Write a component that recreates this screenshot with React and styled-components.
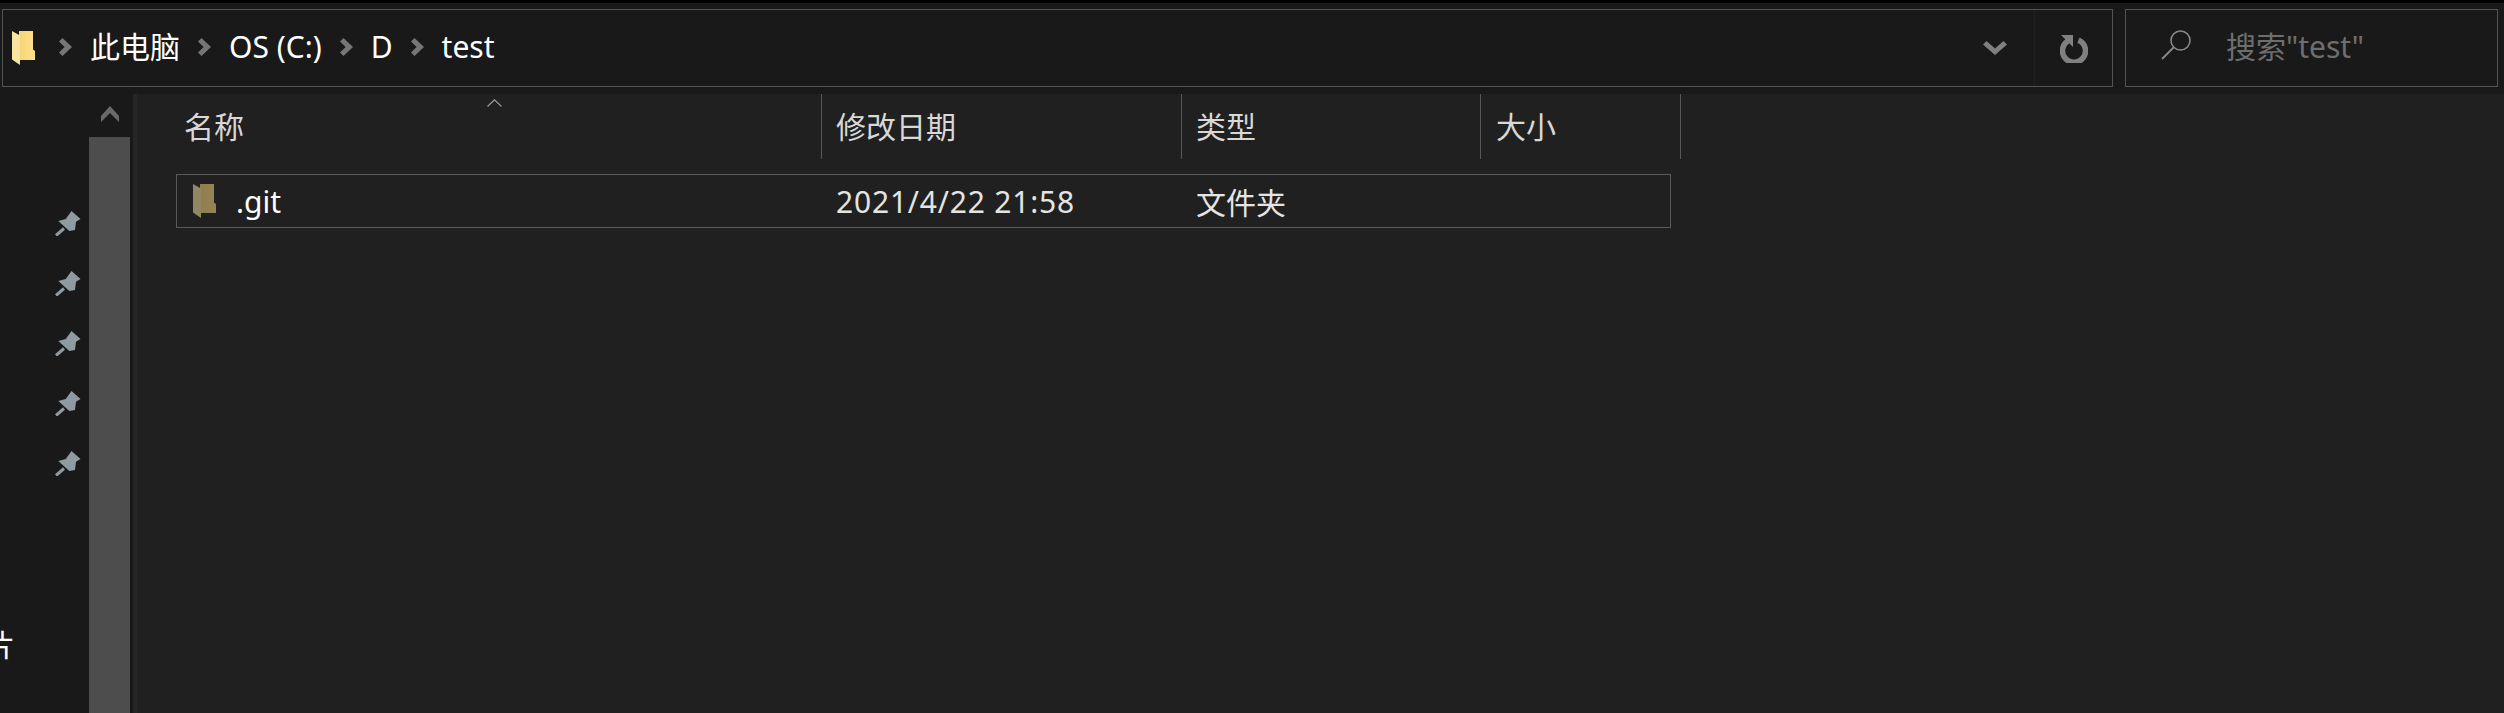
import styled, { createGlobalStyle } from "styled-components";

const GlobalStyle = createGlobalStyle`
  html, body {
    margin: 0;
    padding: 0;
    background: #202020;
    overflow: hidden;
  }
`;

const FolderIcon = ({ dim }) => {
  const id = dim ? "folder-dim" : "folder-main";
  return (
    <FolderSvg viewBox="0 0 23 34" $dim={dim}>
      <defs>
        <linearGradient id={id} x1="0" y1="0" x2="1" y2="0">
          <stop offset="0" stopColor="#f3cf6f" />
          <stop offset="1" stopColor="#ffe08a" />
        </linearGradient>
      </defs>
      <path d="M0 0H21V18.5L23 20V29H7V0Z" fill={`url(#${id})`} />
      <path d="M0 0L8 4.5V34L0 28.5Z" fill="#f8e6a0" />
    </FolderSvg>
  );
};

const Chevron = () => (
  <CrumbChevron viewBox="0 0 13 18">
    <path d="M0 3.5L3.5 0L13 9L3.5 18L0 14.5L5.6 9Z" fill="#767676" />
  </CrumbChevron>
);

const PinIcon = () => (
  <PinSvg viewBox="0 0 26 26">
    <path
      d="M16.5 1L25.5 9L21 11.7L20 20L14.3 21L3.3 11L10.7 9Z"
      fill="#8f9aa1"
    />
    <path d="M1 25.5L9 18.5" stroke="#8f9aa1" strokeWidth="3" />
  </PinSvg>
);

const navRows = [true, true, true, true, true, false, false];

const App = () => {
  return (
    <Page>
      <GlobalStyle />
      <Toolbar>
        <AddressBar>
          <Crumbs>
            <CrumbFolder>
              <FolderIcon />
            </CrumbFolder>
            <Chevron />
            <Crumb>此电脑</Crumb>
            <Chevron />
            <Crumb>OS (C:)</Crumb>
            <Chevron />
            <Crumb>D</Crumb>
            <Chevron />
            <Crumb>test</Crumb>
          </Crumbs>
          <BarButton>
            <svg width="24" height="14" viewBox="0 0 24 14">
              <path d="M0 3.5L3.5 0L12 7.5L20.5 0L24 3.5L12 14Z" fill="#808080" />
            </svg>
          </BarButton>
          <BarButton $divided>
            <svg width="28" height="29" viewBox="0 0 28 29">
              <path
                d="M9.5 6.2A11.5 11.5 0 1 0 18.5 6.2"
                fill="none"
                stroke="#808080"
                strokeWidth="5.6"
              />
              <path d="M1 1H13V13Z" fill="#808080" />
            </svg>
          </BarButton>
        </AddressBar>
        <SearchBar>
          <svg width="30" height="30" viewBox="0 0 30 30">
            <circle cx="19.5" cy="10.5" r="9.5" fill="none" stroke="#8a8a8a" strokeWidth="1.6" />
            <path d="M12.5 17.5L1 29" stroke="#8a8a8a" strokeWidth="1.8" />
          </svg>
          <SearchText>搜索"test"</SearchText>
        </SearchBar>
      </Toolbar>
      <Main>
        <NavPane>
          <NavList>
            {navRows.map((pinned, index) => (
              <NavRow key={index}>{pinned && <PinIcon />}</NavRow>
            ))}
            <NavLabelRow>
              <NavLabel>图片</NavLabel>
            </NavLabelRow>
          </NavList>
          <NavScroll>
            <ScrollUp>
              <svg width="18" height="16" viewBox="0 0 18 16">
                <path d="M0 10L9 0L18 10V16L9 7L0 16Z" fill="#6a6a6a" />
              </svg>
            </ScrollUp>
            <ScrollThumb />
          </NavScroll>
          <Splitter />
        </NavPane>
        <Content>
          <Header>
            <HeaderCell $width={685} $pad={47}>
              名称
              <SortArrow viewBox="0 0 15 8">
                <path d="M0.5 7.5L7.5 0.8L14.5 7.5" fill="none" stroke="#9a9a9a" strokeWidth="1.2" />
              </SortArrow>
            </HeaderCell>
            <HeaderCell $width={360} $pad={14}>修改日期</HeaderCell>
            <HeaderCell $width={299} $pad={14}>类型</HeaderCell>
            <HeaderCell $width={200} $pad={15}>大小</HeaderCell>
          </Header>
          <FileRow>
            <NameCell>
              <FolderIcon dim />
              <span>.git</span>
            </NameCell>
            <DateCell>2021/4/22 21:58</DateCell>
            <TypeCell>文件夹</TypeCell>
          </FileRow>
        </Content>
      </Main>
    </Page>
  );
};

export default App;

const Page = styled.div`
  height: 100vh;
  display: flex;
  flex-direction: column;
  overflow: hidden;
  background: #202020;
  font-family: "Noto Sans", "Noto Sans CJK SC", sans-serif;
  font-size: 30px;
`;

const Toolbar = styled.div`
  height: 94px;
  box-sizing: border-box;
  flex-shrink: 0;
  display: flex;
  column-gap: 12px;
  padding: 6px 6px 7px 2px;
  background: #191919;
  border-top: 3px solid #000;
`;

const AddressBar = styled.div`
  flex: 1;
  display: flex;
  border: 1px solid #545454;
`;

const Crumbs = styled.div`
  flex: 1;
  display: flex;
  align-items: center;
  column-gap: 18px;
  padding-left: 9px;
  padding-bottom: 2px;
  color: #fff;
`;

const CrumbFolder = styled.div`
  display: flex;
  margin-right: 6px;
  padding-top: 2px;
`;

const Crumb = styled.span`
  line-height: 40px;
`;

const CrumbChevron = styled.svg`
  width: 13px;
  height: 18px;
`;

const FolderSvg = styled.svg`
  width: 23px;
  height: 34px;
  flex-shrink: 0;
  opacity: ${(props) => (props.$dim ? 0.52 : 1)};
`;

const BarButton = styled.div`
  width: 78px;
  display: flex;
  align-items: center;
  justify-content: center;
  box-sizing: border-box;
  border-left: ${(props) => (props.$divided ? "1px solid #202020" : "none")};
`;

const SearchBar = styled.div`
  width: 373px;
  box-sizing: border-box;
  display: flex;
  align-items: center;
  column-gap: 35px;
  padding: 0 0 6px 35px;
  border: 1px solid #545454;
`;

const SearchText = styled.span`
  color: #6e6e6e;
`;

const Main = styled.div`
  flex: 1;
  display: flex;
  min-height: 0;
`;

const NavPane = styled.div`
  width: 137px;
  flex-shrink: 0;
  display: flex;
  background: #191919;
`;

const NavList = styled.div`
  width: 89px;
  box-sizing: border-box;
  overflow: hidden;
  padding-top: 99px;
  padding-right: 8px;
`;

const NavRow = styled.div`
  height: 60px;
  display: flex;
  align-items: center;
  justify-content: flex-end;
`;

const NavLabelRow = styled.div`
  height: 60px;
  display: flex;
  align-items: flex-start;
  padding-top: 8px;
`;

const NavLabel = styled.span`
  margin-left: -45px;
  color: #fff;
  white-space: nowrap;
`;

const PinSvg = styled.svg`
  width: 26px;
  height: 26px;
`;

const NavScroll = styled.div`
  width: 41px;
  display: flex;
  flex-direction: column;
`;

const ScrollUp = styled.div`
  height: 43px;
  box-sizing: border-box;
  display: flex;
  justify-content: center;
  padding-top: 12px;
`;

const ScrollThumb = styled.div`
  flex: 1;
  background: #4d4d4d;
`;

const Splitter = styled.div`
  width: 4px;
  margin-left: 3px;
  background: #262626;
`;

const Content = styled.div`
  flex: 1;
  background: #202020;
`;

const Header = styled.div`
  height: 65px;
  display: flex;
`;

const HeaderCell = styled.div`
  position: relative;
  width: ${(props) => props.$width}px;
  box-sizing: border-box;
  display: flex;
  align-items: center;
  padding-left: ${(props) => props.$pad}px;
  padding-bottom: 3px;
  color: #d8d8d8;
  border-right: 1px solid #585858;
`;

const SortArrow = styled.svg`
  position: absolute;
  left: 350px;
  top: 5px;
  width: 15px;
  height: 8px;
`;

const FileRow = styled.div`
  width: 1495px;
  height: 54px;
  box-sizing: border-box;
  display: flex;
  align-items: center;
  margin: 15px 0 0 39px;
  border: 1px solid #5a5a5a;
`;

const NameCell = styled.div`
  width: 659px;
  box-sizing: border-box;
  display: flex;
  align-items: center;
  column-gap: 20px;
  padding-left: 16px;
  color: #fff;
`;

const DateCell = styled.div`
  width: 360px;
  color: #e4e4e4;
  letter-spacing: 0.8px;
`;

const TypeCell = styled.div`
  color: #e4e4e4;
`;
